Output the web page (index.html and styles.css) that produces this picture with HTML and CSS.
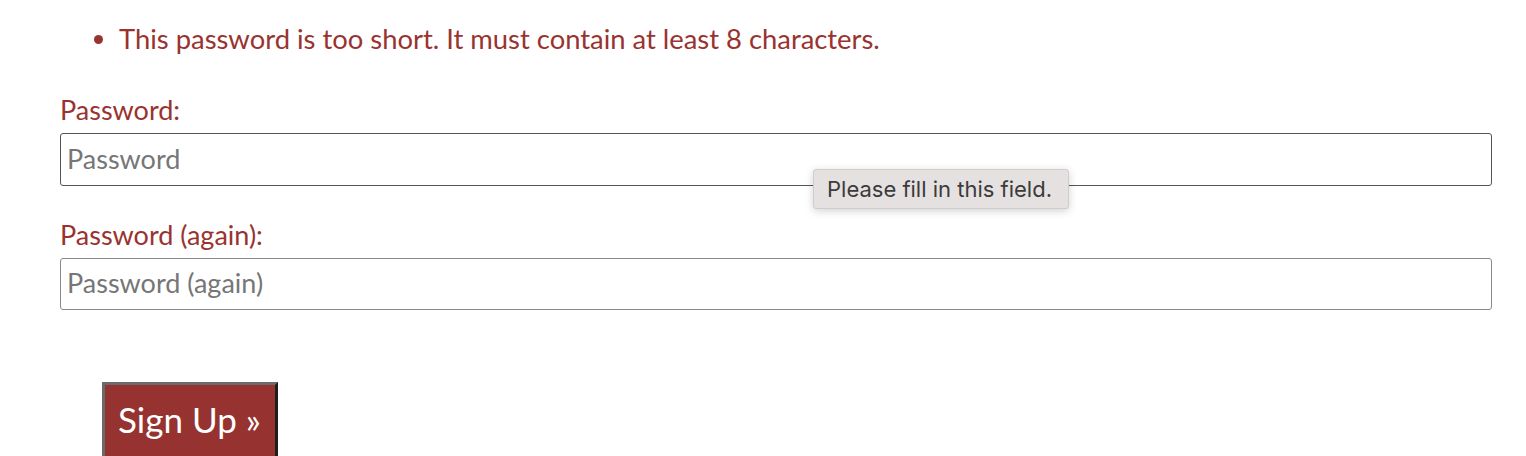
FILE: index.html
```html
<!DOCTYPE html>
<html lang="en">
<head>
<meta charset="utf-8">
<title>Sign Up</title>
<link rel="stylesheet" href="styles.css">
</head>
<body>
<form class="signup">
  <ul class="errorlist">
    <li>This password is too short. It must contain at least 8 characters.</li>
  </ul>
  <div class="field">
    <label class="label" for="pw1">Password:</label>
    <input class="input input-focus" id="pw1" type="password" placeholder="Password">
  </div>
  <div class="field">
    <label class="label" for="pw2">Password (again):</label>
    <input class="input" id="pw2" type="password" placeholder="Password (again)">
  </div>
  <div class="actions">
    <button class="btn" type="button">Sign Up &raquo;</button>
  </div>
  <div class="tooltip">Please fill in this field.</div>
</form>
</body>
</html>
```
FILE: styles.css
```css
html, body {
  margin: 0;
  padding: 0;
  background: #ffffff;
}
body {
  font-family: "Lato", "Open Sans", sans-serif;
  color: #993330;
}
.signup {
  position: relative;
  padding: 0 34px 0 60px;
  display: flex;
  flex-direction: column;
}
.errorlist {
  margin: 24px 0 0 0;
  padding-left: 59px;
  list-style: disc;
  font-size: 27.4px;
  line-height: 30px;
  color: #993330;
}
.field {
  display: flex;
  flex-direction: column;
  margin-top: 41px;
}
.field + .field {
  margin-top: 34px;
}
.label {
  font-size: 27px;
  line-height: 30px;
  margin-bottom: 8px;
  color: #993330;
}
.input {
  box-sizing: border-box;
  height: 52px;
  width: 100%;
  margin: 0;
  padding: 0 6px 3px;
  border: 1px solid #8a8a8a;
  border-radius: 3px;
  font-family: "Lato", "Open Sans", sans-serif;
  font-size: 27px;
  color: #333;
  background: #fff;
  outline: none;
}
.input-focus {
  height: 53px;
  border-color: #555555;
}
.input::placeholder {
  color: #767676;
}
.actions {
  margin-top: 72px;
  padding-left: 42px;
  display: flex;
}
.btn {
  font-family: "Lato", "Open Sans", sans-serif;
  font-size: 35px;
  line-height: 40px;
  color: #ffffff;
  background: #963330;
  border-style: solid;
  border-width: 3px;
  border-color: #6a6a6a #1e1e1e #1e1e1e #6a6a6a;
  padding: 14px 14px 20px 13px;
  border-radius: 0;
}
.tooltip {
  position: absolute;
  left: 813px;
  top: 169px;
  box-sizing: border-box;
  width: 256px;
  height: 40px;
  padding: 0 0 0 13px;
  display: flex;
  align-items: center;
  background: #e6e1e1;
  border: 1px solid #d2cdcd;
  border-radius: 3px;
  box-shadow: 0 2px 8px rgba(0, 0, 0, 0.18);
  font-family: "Inter", "Liberation Sans", sans-serif;
  font-size: 22px;
  color: #3b3b3b;
}
```
